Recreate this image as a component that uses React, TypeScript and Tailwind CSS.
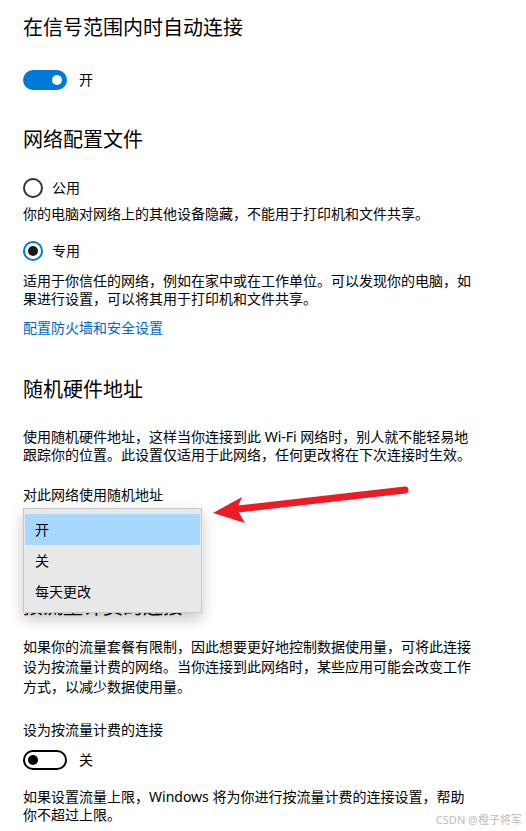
import React from 'react';

function Toggle({ on }: { on: boolean }) {
  if (on) {
    return (
      <div className="w-[44px] h-[20px] rounded-full bg-[#0078d7] flex items-center justify-end pr-[5px]">
        <div className="w-[10px] h-[10px] rounded-full bg-white" />
      </div>
    );
  }
  return (
    <div className="w-[44px] h-[20px] rounded-full border-2 border-black flex items-center pl-[3px]">
      <div className="w-[10px] h-[10px] rounded-full bg-black" />
    </div>
  );
}

function Radio({ checked, label }: { checked: boolean; label: string }) {
  return (
    <div className="flex items-center h-[20px] gap-[9px]">
      {checked ? (
        <div className="w-[20px] h-[20px] rounded-full border-2 border-[#0078d7] flex items-center justify-center">
          <div className="w-[10px] h-[10px] rounded-full bg-[#1a1a1a]" />
        </div>
      ) : (
        <div className="w-[20px] h-[20px] rounded-full border-2 border-[#333]" />
      )}
      <span className="text-[14px] leading-[20px]">{label}</span>
    </div>
  );
}

export default function App() {
  return (
    <div
      className="relative w-[526px] h-[831px] overflow-hidden bg-white text-black px-[23px]"
      style={{ fontFamily: '"Noto Sans", "Noto Sans CJK SC", sans-serif' }}
    >
      <h2 className="mt-[14px] text-[20px] leading-[28px] font-normal">在信号范围内时自动连接</h2>

      <div className="mt-[28px] flex items-center gap-[12px]">
        <Toggle on />
        <span className="text-[14px] leading-[20px]">开</span>
      </div>

      <h2 className="mt-[36px] text-[20px] leading-[28px] font-normal">网络配置文件</h2>

      <div className="mt-[24px]">
        <Radio checked={false} label="公用" />
      </div>
      <p className="mt-[6px] text-[14px] leading-[19px]">你的电脑对网络上的其他设备隐藏，不能用于打印机和文件共享。</p>

      <div className="mt-[18px]">
        <Radio checked label="专用" />
      </div>
      <p className="mt-[11px] text-[14px] leading-[18px]">
        <span className="block whitespace-nowrap">适用于你信任的网络，例如在家中或在工作单位。可以发现你的电脑，如</span>
        <span className="block whitespace-nowrap">果进行设置，可以将其用于打印机和文件共享。</span>
      </p>

      <p className="mt-[10px] text-[14px] leading-[19px] text-[#0067c0]">配置防火墙和安全设置</p>

      <h2 className="mt-[39px] text-[20px] leading-[28px] font-normal">随机硬件地址</h2>

      <p className="mt-[24px] text-[14px] leading-[18px]">
        <span className="block whitespace-nowrap">使用随机硬件地址，这样当你连接到此 Wi-Fi 网络时，别人就不能轻易地</span>
        <span className="block whitespace-nowrap">跟踪你的位置。此设置仅适用于此网络，任何更改将在下次连接时生效。</span>
      </p>

      <p className="mt-[21px] text-[14px] leading-[19px]">对此网络使用随机地址</p>

      {/* 被下拉菜单遮住的标题，底部露出一点 */}
      <h2 className="mt-[89px] text-[20px] leading-[28px] font-normal">按流量计费的连接</h2>

      <p className="mt-[16px] text-[14px] leading-[20px]">
        <span className="block whitespace-nowrap">如果你的流量套餐有限制，因此想要更好地控制数据使用量，可将此连接</span>
        <span className="block whitespace-nowrap">设为按流量计费的网络。当你连接到此网络时，某些应用可能会改变工作</span>
        <span className="block whitespace-nowrap">方式，以减少数据使用量。</span>
      </p>

      <p className="mt-[23px] text-[14px] leading-[19px]">设为按流量计费的连接</p>

      <div className="mt-[11px] flex items-center gap-[12px]">
        <Toggle on={false} />
        <span className="text-[14px] leading-[20px]">关</span>
      </div>

      <p className="mt-[18px] text-[14px] leading-[18px]">
        <span className="block whitespace-nowrap">如果设置流量上限，Windows 将为你进行按流量计费的连接设置，帮助</span>
        <span className="block whitespace-nowrap">你不超过上限。</span>
      </p>

      {/* 下拉菜单浮层 */}
      <div className="absolute left-[23px] top-[508px] w-[179px] h-[105px] bg-[#e8e8e8] border border-[#c8c8c8] shadow-[0_6px_14px_rgba(0,0,0,0.22)] px-[1px] pt-[5px]">
        <div className="h-[31px] flex items-center px-[10px] bg-[#a8d7fd] text-[14px]">开</div>
        <div className="h-[31px] flex items-center px-[10px] text-[14px]">关</div>
        <div className="h-[31px] flex items-center px-[10px] text-[14px]">每天更改</div>
      </div>

      {/* 红色箭头 */}
      <svg className="absolute left-0 top-0 pointer-events-none" width="526" height="831" viewBox="0 0 526 831">
        <line x1="405" y1="490" x2="238" y2="509" stroke="#ed1c24" strokeWidth="7" strokeLinecap="round" />
        <polygon points="213,513 242,497 237,509 245,523" fill="#ed1c24" />
      </svg>

      <div className="absolute right-[4px] bottom-[4px] text-[11px] leading-[14px] text-[#bdbdbd]">CSDN @橙子将军</div>
    </div>
  );
}
